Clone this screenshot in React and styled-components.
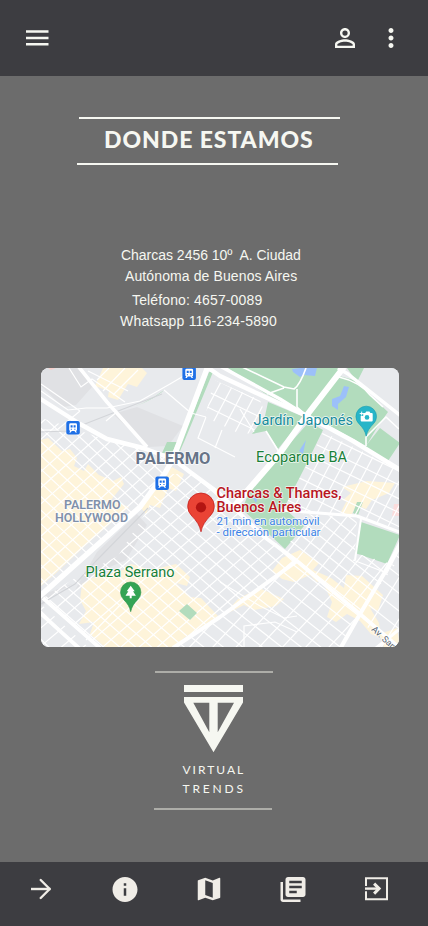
import React from "react";
import styled, { createGlobalStyle } from "styled-components";
import { MdPersonOutline, MdMoreVert, MdInfo, MdMap, MdLibraryBooks } from "react-icons/md";

const GlobalStyle = createGlobalStyle`
  * { box-sizing: border-box; }
  body { margin: 0; background: #6c6c6c; }
  svg { display: block; }
`;

const Screen = styled.div`
  display: flex;
  flex-direction: column;
  width: 428px;
  height: 926px;
  overflow: hidden;
  background: #6c6c6c;
  color: #f6f7f1;
`;

const TopBar = styled.header`
  display: flex;
  align-items: center;
  height: 76px;
  padding: 0 22px 0 26px;
  background: #3d3d41;
`;

const IconButton = styled.button`
  display: flex;
  align-items: center;
  justify-content: center;
  flex: none;
  width: ${(p) => p.$width || 30}px;
  height: 30px;
  margin-left: ${(p) => p.$gap || 0};
  padding: 0;
  border: 0;
  background: none;
  color: ${(p) => p.$tone || "#f6f7f1"};
`;

const Content = styled.main`
  display: flex;
  flex-direction: column;
  align-items: flex-start;
  flex: 1;
  min-height: 0;
  padding-top: 41px;
`;

const Rule = styled.div`
  width: ${(p) => p.$width}px;
  height: 2px;
  margin-left: ${(p) => p.$left}px;
  background: ${(p) => p.$color || "#f6f7f1"};
`;

const Title = styled.h1`
  height: 44px;
  margin: 0 0 0 104px;
  font: 900 23px/40px Lato, sans-serif;
  letter-spacing: 0.93px;
  white-space: nowrap;
`;

const Contact = styled.address`
  margin-top: 80px;
  font: normal 14px/21px "Liberation Sans", Arial, sans-serif;
  white-space: pre;
`;

const ContactLine = styled.div`
  margin: ${(p) => p.$top || 0}px 0 0 ${(p) => p.$left}px;
  letter-spacing: ${(p) => p.$spacing || 0}px;
`;

const MapCard = styled.section`
  width: 358px;
  height: 279px;
  margin: 36px 0 24px 41px;
  border-radius: 8px;
  overflow: hidden;
  background: #e8eaed;
`;

const Brand = styled.div`
  display: flex;
  flex-direction: column;
  align-items: center;
  width: 117px;
  height: 135px;
  margin-left: 155px;
  padding-top: 12px;
`;

const BrandName = styled.div`
  margin-top: 7px;
`;

const BrandWord = styled.div`
  width: 62px;
  font: 400 12px/19px Lato, sans-serif;
  letter-spacing: ${(p) => p.$spacing}px;
  white-space: nowrap;
`;

const BottomBar = styled.nav`
  display: flex;
  justify-content: space-between;
  height: 64px;
  padding: 12px 36px 0 26px;
  background: #3d3d41;
`;

const MapLabel = styled.text`
  font-family: Roboto, sans-serif;
  font-size: ${(p) => p.$size}px;
  font-weight: ${(p) => p.$weight || 400};
  fill: ${(p) => p.$color};
  stroke: #ffffff;
  stroke-opacity: 0.8;
  stroke-width: 1.6px;
  stroke-linejoin: round;
  paint-order: stroke;
`;

const zones = [
  { id: "hollywood", area: "41,418 60,424 107,440 146,449 172,460 140,508 41,596", at: [70, 510], sets: [[-42, 12], [43, 10]] },
  { id: "soho", area: "165,474 190,474 220,495 297,561 220,617 172,647 100,647 43,598 75,578 118,556 146,512", at: [150, 590], sets: [[-41, 12], [41, 10.5]] },
  { id: "botanico", area: "323,432 400,470 400,530 357,516 300,511 284,508 306,466", at: [340, 470], sets: [[26, 12.5], [-62, 11.5]] },
  { id: "guemes", area: "303,514 357,517 355,553 395,565 360,612 284,549 303,526", at: [320, 550], sets: [[38, 11], [-51, 12]] },
  { id: "villa", area: "297,562 360,615 340,647 172,647 220,618", at: [280, 600], sets: [[38, 12], [-47, 17]] },
  { id: "norte", area: "214,380 260,400 265,413 252,434 236,432 205,417", at: [225, 400], sets: [[26, 14], [-62, 12]] },
  { id: "west", area: "41,604 88,647 41,647", at: [60, 630], sets: [[-40, 14], [45, 20]] },
  { id: "east", area: "400,548 400,647 378,647 362,617", at: [385, 600], sets: [[38, 14], [-58, 22]] },
];

const Streets = ({ zone }) => (
  <g clipPath={`url(#${zone.id})`}>
    {zone.sets.map(([angle, gap]) => (
      <g key={angle} transform={`translate(${zone.at.join(" ")}) rotate(${angle})`}>
        {Array.from({ length: 31 }, (_, i) => (
          <path key={i} d={`M-160 ${(i - 15) * gap}H160`} />
        ))}
      </g>
    ))}
  </g>
);

const Station = ({ x, y }) => (
  <g transform={`translate(${x} ${y})`}>
    <rect width="13.5" height="13.5" rx="2" fill="#1f70e6" />
    <path d="M4.3 2.2h5q1.4 0 1.4 1.4v5q0 1.1-1 1.2l1 1.6H9.2L8.2 10H5.4l-1 1.4H2.9l1-1.6q-1-.1-1-1.2v-5q0-1.4 1.4-1.4z" fill="#fff" />
    <path d="M4.3 4.2h2v2.2h-2zM7.3 4.2h2v2.2h-2zM4.5 7.7h1.1v1H4.5zM8 7.7h1.1v1H8z" fill="#1f70e6" />
  </g>
);

const Pin = ({ x, y, scale, color, edge, children }) => (
  <g transform={`translate(${x} ${y})`}>
    <path
      transform={`scale(${scale})`}
      d="M0 19C-1 14-3.2 11-6.8 7.2A10 10 0 1 1 6.8 7.2C3.2 11 1 14 0 19Z"
      fill={color}
      stroke={edge}
      strokeWidth=".6"
    />
    {children}
  </g>
);

const CityMap = () => (
  <svg width="358" height="279" viewBox="41 368 358 279" role="img" aria-label="Mapa">
    <defs>
      {zones.map((z) => (
        <clipPath id={z.id} key={z.id}>
          <polygon points={z.area} />
        </clipPath>
      ))}
    </defs>
    <rect x="41" y="368" width="358" height="279" fill="#e8eaed" />
    <g fill="#e0e1e4">
      <path d="M46 368H78L92 387 76 405 63 407 41 386V373ZM113 414 137 407 183 426 168 446 148 447ZM97 552 137 514 147 525 126 560 96 573 75 590ZM41 595 75 583 97 562 90 575 57 592 41 607Z" />
    </g>
    <g fill="#fef4da">
      <path d="M103 368H142L147 373 137 387 128 384 118 400 108 397 109 391 95 386Z" />
      <path d="M41 440 48 438 62 451 70 449 77 458 74 466 84 471 88 464 99 475 113 481 121 477 124 484 111 500 129 507 121 514 88 543 56 573 41 586Z" />
      <path d="M172 467 184 474 176 491 168 488 160 508 150 505 146 514 141 508Z" />
      <path d="M82 584 92 578 123 570 131 564 151 570 176 564 190 577 187 586 176 583 190 597 201 598 218 616 184 638 174 647H105L90 634 94 622 79 624 86 611 80 600Z" />
      <path d="M272 571 282 558 300 550 319 563 313 570 329 577 317 582 310 575 294 582 282 579ZM222 617 238 599 259 588 284 599 276 606 254 610 244 605 224 615Z" />
      <path d="M319 574 331 578 344 588 346 575 362 576 383 595 378 611 370 608 379 623 381 638 371 634 360 621 347 614 336 622 327 617 332 602Z" />
      <path d="M342 487 367 481 395 483 389 493 372 500 366 509 343 500 351 493ZM346 502 357 503 350 518 341 512ZM380 634 397 628 400 647H384Z" />
    </g>
    <path d="M394 504H399V516H392Z" fill="#fbdcdc" />
    <path d="M48 368h8l-5 2z" fill="#f6cfcb" />
    <g fill="#b2dcbd">
      <path d="M228 368H340L307 415 264 393Z" />
      <path d="M347 368H364L357 382ZM339 376 354 380 388 412 378 426 366 446 308 414ZM380 428 400 443 388 461 365 447Z" />
      <path d="M268 402 304 417 278 449 266 431 252 434 265 416ZM309 422 323 430 304 469 284 508 304 526 285 549 242 509 252 486Z" />
      <path d="M361 522 400 535 387 564 355 553ZM357 502H363L358 515 353 513ZM162 453 167 442H177L172 453Z" />
      <path d="M122 410Q145 405 164 390L162 392Q147 404 122 410ZM209 372H213L184 442 180 451 178 450Z" />
    </g>
    <g fill="#9cc0f9">
      <path d="M292 369 300 368H317L315 376 304 375 300 377 293 372ZM332 399 340 396 344 386 349 387 346 397 338 404V410L332 406ZM299 451 306 440 303 454ZM253 498 258 496 256 503Z" />
    </g>

    <g stroke="#fff" strokeWidth="1.2" fill="none">
      {zones.map((z) => (
        <Streets zone={z} key={z.id} />
      ))}
      <path d="M41 391 68 410 86 408H107L140 401 170 384 192 371M164 390 191 413M41 384 80 411M41 430H57L80 411M69 368 81 387 92 379 125 402M97 380 109 368M103 391 125 368M113 395 138 370M88 371 128 391M106 421 118 411" />
      <path d="M191 413 206 417M206 417 198 438 235 457M215 448 222 430M240 409 254 432" />
      <path d="M306 368Q300 385 294 389L284 387 240 366M284 388 267 394M297 389V407L305 414M339 377Q360 382 370 395L383 407M366 446V437L386 417 399 429M266 431 279 452" strokeWidth="1.6" />
      <path d="M86 640 125 600M220 582 260 606 284 618 297 616M244 647V626L275 622 297 632M353 560 387 573 400 548" />
    </g>
    <path d="M179 611 187 604 197 613 190 620Z" fill="#b2dcbd" />
    <path d="M41 432 67 431 113 413 162 394M41 604 75 584 97 560 148 508" fill="none" stroke="#d3d5d9" strokeWidth="1.1" />

    <g stroke="#fff" strokeLinejoin="round" fill="none" strokeWidth="5">
      <path d="M39 398 80 424 107 439 143 448 173 459 190 472 220 494" strokeWidth="4.4" />
      <path d="M220 494 263 536 297 561 330 589 360 614 402 650" strokeWidth="3.8" />
      <path d="M78 366 107 402 147 447" strokeWidth="3.6" />
      <path d="M208 366 173 459 165 473 140 507 39 597" strokeWidth="5.4" />
      <path d="M207 367 220 376 263 396 307 416 353 441 402 471" strokeWidth="4.4" />
      <path d="M344 367 307 415 280 453 248 490 232 509" strokeWidth="6" />
      <path d="M338 368 348 374 402 417M220 366 280 399 307 416" strokeWidth="3.5" />
      <path d="M43 598 100 648M39 612 80 649" strokeWidth="3.8" />
      <path d="M173 648 220 617 297 561" strokeWidth="4" />
      <path d="M402 540 385 572 360 614 340 649" strokeWidth="4.2" />
      <path d="M280 510 357 516 402 533M375 649 402 627" strokeWidth="3.2" />
      <path d="M361 519 355 560" strokeWidth="2" />
    </g>

    <Station x={182.4} y={366.6} />
    <Station x={66.3} y={421.1} />
    <Station x={155.4} y={476.4} />

    <Pin x={201} y={506.5} scale={1.33} color="#ea4335" edge="#c5221f">
      <circle cy=".8" r="5.1" fill="#b31412" />
    </Pin>
    <Pin x={130.7} y={592.3} scale={1.02} color="#34a455" edge="#2b9149">
      <path d="M0-6.5 4-1H2.3L5.2 3.5H1V6H-1V3.5H-5.2L-2.3-1H-4Z" fill="#fff" />
    </Pin>
    <Pin x={366.2} y={416.6} scale={1.03} color="#27b5c8" edge="#199eb0">
      <path d="M-3-3.5H-1L0-5H3.2L4.2-3.5H5.5Q6.5-3.5 6.5-2.5V4Q6.5 5 5.5 5H-4.5Q-5.5 5-5.5 4V-.5H-3Z" fill="#fff" />
      <circle cx=".8" cy=".8" r="2.3" fill="#27b5c8" />
      <path d="M-4.5-5V-1M-6.5-3H-2.5" stroke="#fff" strokeWidth="1" />
    </Pin>

    <MapLabel x="135.5" y="464" $size={16} $weight={700} $color="#677488" textLength="75" lengthAdjust="spacingAndGlyphs">PALERMO</MapLabel>
    <MapLabel x="64" y="509" $size={12.5} $weight={600} $color="#8090aa" textLength="56.5" lengthAdjust="spacingAndGlyphs">PALERMO</MapLabel>
    <MapLabel x="55" y="521.6" $size={12.5} $weight={600} $color="#8090aa" textLength="73" lengthAdjust="spacingAndGlyphs">HOLLYWOOD</MapLabel>
    <MapLabel x="253.5" y="425.3" $size={15} $color="#168b9c" textLength="99.5" lengthAdjust="spacingAndGlyphs">Jardín Japonés</MapLabel>
    <MapLabel x="256" y="462" $size={15} $color="#188038" textLength="91" lengthAdjust="spacingAndGlyphs">Ecoparque BA</MapLabel>
    <MapLabel x="216.5" y="498" $size={15} $weight={500} $color="#b8161e" textLength="125" lengthAdjust="spacingAndGlyphs">Charcas &amp; Thames,</MapLabel>
    <MapLabel x="216.5" y="512.2" $size={15} $weight={500} $color="#b8161e" textLength="85" lengthAdjust="spacingAndGlyphs">Buenos Aires</MapLabel>
    <MapLabel x="216.5" y="524.5" $size={11.5} $color="#3b82e6" textLength="103" lengthAdjust="spacingAndGlyphs">21 min en automóvil</MapLabel>
    <MapLabel x="216.5" y="536" $size={11.5} $color="#3b82e6" textLength="104" lengthAdjust="spacingAndGlyphs">- dirección particular</MapLabel>
    <MapLabel x="85.5" y="577" $size={15} $color="#188038" textLength="89" lengthAdjust="spacingAndGlyphs">Plaza Serrano</MapLabel>
    <MapLabel transform="translate(371 630) rotate(43)" $size={9} $color="#5b6774">Av. San</MapLabel>
  </svg>
);

const BrandMark = () => (
  <svg width="59" height="68" viewBox="184 685 59 68" aria-hidden="true">
    <path d="M184 685H243V692H184Z" fill="#f6f7f1" />
    <path
      fillRule="evenodd"
      d="M184 697H243V702.5L213.5 752.3 184 702.5ZM193.3 702.7 209.3 732.3V702.7ZM217.7 702.7V732.3L234 702.7Z"
      fill="#f6f7f1"
    />
  </svg>
);

const MenuIcon = () => (
  <svg width="23" height="16" fill="currentColor">
    <path d="M0 .2h22.5v2.5H0zM0 6.7h22.5v2.5H0zM0 13.1h22.5v2.5H0z" />
  </svg>
);

const ForwardIcon = () => (
  <svg width="30" height="30" fill="none" stroke="currentColor" strokeWidth="2.4" strokeLinejoin="round">
    <path d="M5 15H24.5" />
    <path d="M14.7 6 23.7 15 14.7 24" strokeLinecap="round" />
  </svg>
);

const ExitIcon = () => (
  <svg width="30" height="30" fill="none" stroke="currentColor">
    <path d="M4 12V4.2H25V25.2H4V17.3" strokeWidth="2" />
    <path d="M3 14.6H16.6" strokeWidth="2.4" />
    <path d="M12.1 9.6 17.1 14.6 12.1 19.6" strokeWidth="3" />
  </svg>
);

const CREAM = "#f0ede7";

export default function App() {
  return (
    <Screen>
      <GlobalStyle />
      <TopBar>
        <IconButton $width={23} aria-label="Menú"><MenuIcon /></IconButton>
        <IconButton $gap="auto" aria-label="Perfil"><MdPersonOutline size={30} /></IconButton>
        <IconButton $gap="16px" aria-label="Más"><MdMoreVert size={30} /></IconButton>
      </TopBar>
      <Content>
        <Rule $left={79} $width={261} />
        <Title>DONDE ESTAMOS</Title>
        <Rule $left={77} $width={261} />
        <Contact>
          <ContactLine $left={121} $spacing={-0.02}>{"Charcas 2456 10º  A. Ciudad"}</ContactLine>
          <ContactLine $left={125} $spacing={0.11}>Autónoma de Buenos Aires</ContactLine>
          <ContactLine $left={132} $top={3} $spacing={0.14}>Teléfono: 4657-0089</ContactLine>
          <ContactLine $left={120} $spacing={0.19}>Whatsapp 116-234-5890</ContactLine>
        </Contact>
        <MapCard><CityMap /></MapCard>
        <Rule $left={155} $width={118} $color="#adada8" />
        <Brand>
          <BrandMark />
          <BrandName>
            <BrandWord $spacing={2}>VIRTUAL</BrandWord>
            <BrandWord $spacing={2.85}>TRENDS</BrandWord>
          </BrandName>
        </Brand>
        <Rule $left={154} $width={118} $color="#adada8" />
      </Content>
      <BottomBar>
        <IconButton $tone={CREAM} aria-label="Siguiente"><ForwardIcon /></IconButton>
        <IconButton $tone={CREAM} aria-label="Información"><MdInfo size={31} /></IconButton>
        <IconButton $tone={CREAM} aria-label="Mapa"><MdMap size={30} /></IconButton>
        <IconButton $tone={CREAM} aria-label="Noticias"><MdLibraryBooks size={31} /></IconButton>
        <IconButton $tone={CREAM} aria-label="Salir"><ExitIcon /></IconButton>
      </BottomBar>
    </Screen>
  );
}
